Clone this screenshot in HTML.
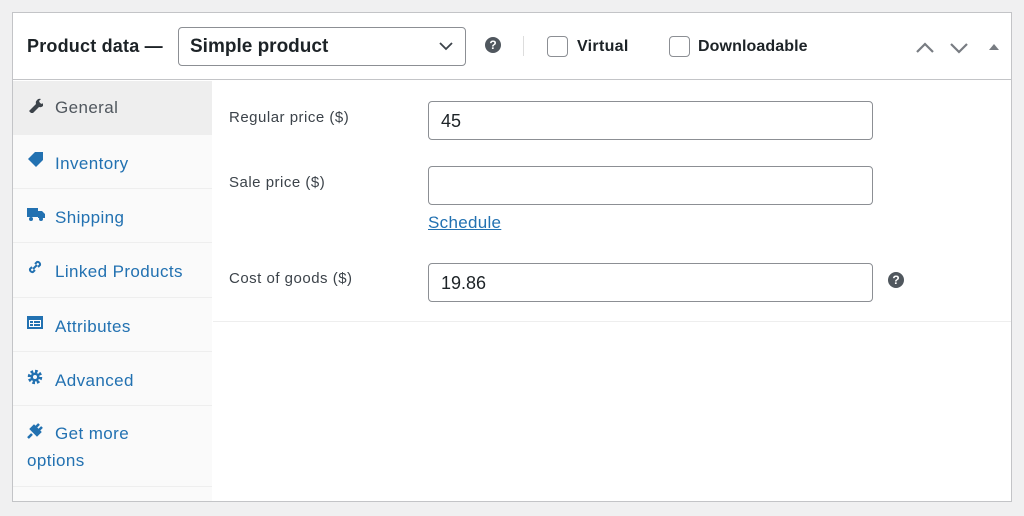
<!DOCTYPE html>
<html><head><style>
*{box-sizing:border-box;margin:0;padding:0}
body{width:1024px;height:516px;background:#f0f0f1;font-family:"Liberation Sans",Arial,sans-serif;position:relative;overflow:hidden;color:#1d2327}
.a{position:absolute}
.panel{left:12px;top:12px;width:1000px;height:490px;background:#fff;border:1px solid #c3c4c7}
.hdr{left:13px;top:13px;width:998px;height:67px;border-bottom:1px solid #c3c4c7;background:#fff}
.side{left:13px;top:81px;width:199px;height:420px;background:#fafafa}
.tab{position:absolute;left:0;width:199px;border-bottom:1px solid #eee;font-size:17px;letter-spacing:0.4px;color:#2271b1}
.tab span{position:absolute;left:42px}
.ic{position:absolute;left:14px}
.lbl{font-size:15px;letter-spacing:0.5px;color:#3c434a}
.inp{border:1px solid #8c8f94;border-radius:4px;background:#fff;font-size:18px;padding-left:12px;color:#1d2327}
.cb{width:21px;height:21px;border:1px solid #8c8f94;border-radius:4px;background:#fff}
.q{width:16px;height:16px;border-radius:50%;background:#50575e;color:#fff;font-size:12px;font-weight:bold;text-align:center;line-height:16px}
</style></head><body>
<div class="a panel"></div>
<div class="a hdr"></div>
<div class="a" style="left:27px;top:36px;font-size:18px;font-weight:bold;letter-spacing:0.2px">Product data —</div>
<div class="a inp" style="left:178px;top:27px;width:288px;height:39px;font-size:19px;font-weight:bold;line-height:37px;padding-left:11px">Simple product</div>
<svg class="a" style="left:438px;top:40px" width="16" height="12"><path d="M2 3l6 6 6-6" stroke="#3c434a" stroke-width="1.8" fill="none"/></svg>
<div class="a q" style="left:485px;top:37px">?</div>
<div class="a" style="left:523px;top:36px;width:1px;height:20px;background:#ddd"></div>
<div class="a cb" style="left:547px;top:36px"></div>
<div class="a" style="left:577px;top:38px;font-size:16px;font-weight:bold;letter-spacing:0.3px">Virtual</div>
<div class="a cb" style="left:669px;top:36px"></div>
<div class="a" style="left:698px;top:38px;font-size:16px;font-weight:bold;letter-spacing:0.1px">Downloadable</div>
<svg class="a" style="left:914px;top:38px" width="90" height="18"><path d="M3 14l8-8 8 8" stroke="#787c82" stroke-width="2.2" fill="none"/><path d="M37 6l8 8 8-8" stroke="#787c82" stroke-width="2.2" fill="none"/><path d="M75 12l5-6 5 6z" fill="#787c82"/></svg>
<div class="a side">
 <div class="tab" style="top:0;height:54px;background:#eee;color:#50575e"><svg class="ic" style="top:16px" width="16" height="16"><path d="M2 14l7-7a4 4 0 0 1 5-5l-2 2 1 2 2 1 2-2a4 4 0 0 1-5 5l-7 7z" fill="#3c434a"/></svg><span style="top:17px">General</span></div>
 <div class="tab" style="top:54px;height:54px"><svg class="ic" style="top:16px" width="18" height="16"><path d="M8 1l8 0 0 8-7 7-8-8z" fill="#2271b1"/></svg><span style="top:19px">Inventory</span></div>
 <div class="tab" style="top:108px;height:54px"><svg class="ic" style="top:18px" width="18" height="14"><path d="M0 1h11v9H0z M11 4h4l3 3v4H11z" fill="#2271b1"/><circle cx="4" cy="12" r="2" fill="#2271b1"/><circle cx="14" cy="12" r="2" fill="#2271b1"/></svg><span style="top:19px">Shipping</span></div>
 <div class="tab" style="top:162px;height:55px"><svg class="ic" style="top:16px" width="16" height="16"><path d="M6 10l4-4M5 8l-2 2a2.5 2.5 0 0 0 3 3l2-2M11 8l2-2a2.5 2.5 0 0 0-3-3L8 5" stroke="#2271b1" stroke-width="2" fill="none"/></svg><span style="top:19px">Linked Products</span></div>
 <div class="tab" style="top:217px;height:54px"><svg class="ic" style="top:18px" width="16" height="13"><rect x="0" y="0" width="16" height="13" fill="#2271b1"/><rect x="2" y="4" width="12" height="7" fill="#fff"/><rect x="3" y="5" width="3" height="2" fill="#2271b1"/><rect x="3" y="8" width="3" height="2" fill="#2271b1"/><rect x="7" y="5" width="6" height="2" fill="#2271b1"/><rect x="7" y="8" width="6" height="2" fill="#2271b1"/></svg><span style="top:19px">Attributes</span></div>
 <div class="tab" style="top:271px;height:54px"><svg class="ic" style="top:17px" width="16" height="16"><circle cx="8" cy="8" r="5.5" fill="none" stroke="#2271b1" stroke-width="3.5" stroke-dasharray="2.5 1.8"/><circle cx="8" cy="8" r="4.5" fill="#2271b1"/><circle cx="8" cy="8" r="2" fill="#fafafa"/></svg><span style="top:19px">Advanced</span></div>
 <div class="tab" style="top:325px;height:81px"><svg class="ic" style="top:17px" width="16" height="16"><path d="M1 15l4-4M4 6l6 6 3-3-6-6zM9 4l3-3M12 7l3-3" stroke="#2271b1" stroke-width="2.5" fill="#2271b1"/></svg><span style="line-height:27px;top:14px;left:14px;text-indent:28px;width:125px">Get more options</span></div>
</div>
<div class="a" style="left:213px;top:321px;width:798px;height:1px;background:#eee"></div>
<div class="a lbl" style="left:229px;top:109px">Regular price ($)</div>
<div class="a inp" style="left:428px;top:101px;width:445px;height:39px;line-height:38px">45</div>
<div class="a lbl" style="left:229px;top:174px">Sale price ($)</div>
<div class="a inp" style="left:428px;top:166px;width:445px;height:39px"></div>
<div class="a" style="left:428px;top:213px;font-size:17px;letter-spacing:0.3px;color:#2271b1;text-decoration:underline">Schedule</div>
<div class="a lbl" style="left:229px;top:270px">Cost of goods ($)</div>
<div class="a inp" style="left:428px;top:263px;width:445px;height:39px;line-height:38px">19.86</div>
<div class="a q" style="left:888px;top:272px">?</div>
</body></html>
